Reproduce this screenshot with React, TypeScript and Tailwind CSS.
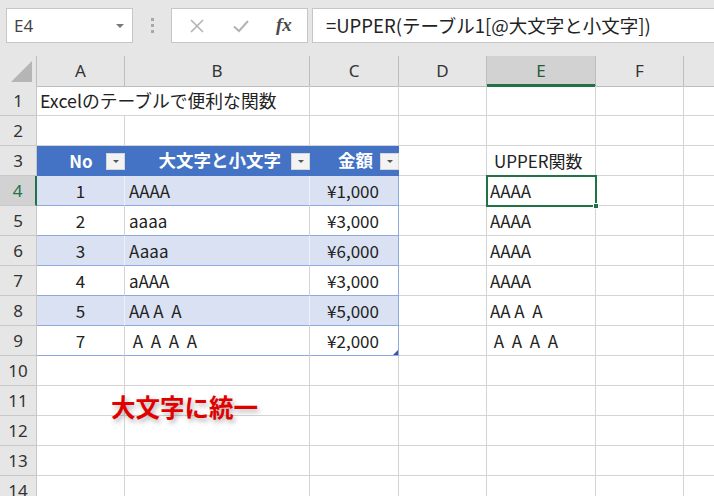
import React from 'react'

const GRID = 'grid grid-cols-[37px_88px_185px_89px_88px_109px_88px_88px]'
const CELL_FONT = { fontFamily: '"Noto Sans CJK JP", "Noto Sans", sans-serif' }
const HEAD_FONT = { fontFamily: '"Noto Sans", "Noto Sans CJK JP", sans-serif' }

// G is off screen, its label is not visible
const columns = ['A', 'B', 'C', 'D', 'E', 'F', '']

const tableRows = [
  { no: '1', txt: 'AAAA', amt: '¥1,000', up: 'AAAA' },
  { no: '2', txt: 'aaaa', amt: '¥3,000', up: 'AAAA' },
  { no: '3', txt: 'Aaaa', amt: '¥6,000', up: 'AAAA' },
  { no: '4', txt: 'aAAA', amt: '¥3,000', up: 'AAAA' },
  { no: '5', txt: 'AA A  A', amt: '¥5,000', up: 'AA A  A' },
  { no: '7', txt: ' A  A  A  A', amt: '¥2,000', up: ' A  A  A  A' },
]

function FilterButton() {
  return (
    <span className="absolute right-0 top-[7px] flex h-[17px] w-[19px] items-center justify-center border border-[#d6d6d6] bg-[#f3f3f3]">
      <span className="h-0 w-0 border-x-[3px] border-t-[3px] border-x-transparent border-t-[#555]" />
    </span>
  )
}

function RowHeader({ n, active }: { n: number; active?: boolean }) {
  return (
    <div
      style={HEAD_FONT}
      className={
        active
          ? 'flex items-center justify-center border-b border-r-2 border-b-[#c8c8c8] border-r-[#217346] bg-[#d2d2d2] text-[17px] text-[#217346]'
          : 'flex items-center justify-center border-b border-r border-[#c8c8c8] bg-[#e6e6e6] text-[17px] text-[#333]'
      }
    >
      {n}
    </div>
  )
}

function Blank({ className = '' }: { className?: string }) {
  return <div className={`border-b border-r border-[#d4d4d4] ${className}`} />
}

function TextCell({ children, className = '' }: { children: React.ReactNode; className?: string }) {
  return (
    <div
      style={CELL_FONT}
      className={`flex items-center overflow-hidden whitespace-pre border-b border-r text-[17px] text-[#222] ${className}`}
    >
      {children}
    </div>
  )
}

export default function App() {
  return (
    <div className="h-[496px] w-[714px] overflow-hidden bg-white">
      {/* formula bar */}
      <div className="flex h-[56px] items-start bg-[#e6e6e6] pt-2">
        <div className="ml-[6px] flex h-[35px] w-[127px] items-center justify-between border border-[#c6c6c6] bg-white pl-[7px] pr-[8px]">
          <span style={HEAD_FONT} className="text-[17px] text-[#444]">
            E4
          </span>
          <span className="h-0 w-0 border-x-[4px] border-t-[4px] border-x-transparent border-t-[#777]" />
        </div>
        <div className="flex w-[38px] flex-col items-center gap-[3px] pt-[10px]">
          <span className="h-[3px] w-[3px] bg-[#a8a8a8]" />
          <span className="h-[3px] w-[3px] bg-[#a8a8a8]" />
          <span className="h-[3px] w-[3px] bg-[#a8a8a8]" />
        </div>
        <div className="flex h-[35px] w-[137px] items-center border border-[#c6c6c6] bg-white">
          <svg width="14" height="14" viewBox="0 0 14 14" className="ml-[18px]">
            <path d="M1 1 L13 13 M13 1 L1 13" stroke="#b3b3b3" strokeWidth="1.6" fill="none" />
          </svg>
          <svg width="16" height="14" viewBox="0 0 16 14" className="ml-[29px]">
            <path d="M1 7.5 L6 12 L15 2" stroke="#b3b3b3" strokeWidth="2" fill="none" />
          </svg>
          <span
            style={{ fontFamily: '"Liberation Serif", "DejaVu Serif", serif' }}
            className="ml-[27px] text-[19px] font-bold italic text-[#4a4a4a]"
          >
            fx
          </span>
        </div>
        <div className="ml-[4px] flex h-[35px] flex-1 items-center border border-r-0 border-[#c6c6c6] bg-white pl-[13px]">
          <span style={CELL_FONT} className="text-[18.5px] text-[#222]">
            =UPPER(テーブル1[@大文字と小文字])
          </span>
        </div>
      </div>

      <div className="relative w-[772px]">
        {/* column headers */}
        <div className={`${GRID} h-[30px]`}>
          <div className="flex items-end justify-end border-b border-r border-[#bdbdbd] bg-[#e6e6e6] pb-[4px] pr-[4px]">
            <svg width="21" height="21" viewBox="0 0 21 21">
              <path d="M21 0 L21 21 L0 21 Z" fill="#b5b5b5" />
            </svg>
          </div>
          {columns.map((c, i) => (
            <div
              key={i}
              style={HEAD_FONT}
              className={
                c === 'E'
                  ? 'flex items-center justify-center border-b-[3px] border-r border-b-[#217346] border-r-[#bdbdbd] bg-[#d2d2d2] pt-[2px] text-[17px] text-[#1e5c3a]'
                  : 'flex items-center justify-center border-b border-r border-[#bdbdbd] bg-[#e6e6e6] text-[17px] text-[#333]'
              }
            >
              {c}
            </div>
          ))}
        </div>

        {/* row 1 */}
        <div className={`${GRID} h-[30px]`}>
          <RowHeader n={1} />
          <div style={CELL_FONT} className="relative z-10 flex items-center whitespace-nowrap border-b border-[#d4d4d4] pl-[3px] text-[17.8px] text-[#222]">
            Excelのテーブルで便利な関数
          </div>
          <Blank />
          <Blank />
          <Blank />
          <Blank />
          <Blank />
          <Blank />
        </div>

        {/* row 2 */}
        <div className={`${GRID} h-[30px]`}>
          <RowHeader n={2} />
          <Blank />
          <Blank />
          <Blank />
          <Blank />
          <Blank />
          <Blank />
          <Blank />
        </div>

        {/* row 3: table header */}
        <div className={`${GRID} h-[30px]`}>
          <RowHeader n={3} />
          <div style={CELL_FONT} className="relative flex items-center justify-center border-b border-[#4472c4] bg-[#4472c4] text-[17px] font-bold text-white">
            No
            <FilterButton />
          </div>
          <div style={CELL_FONT} className="relative flex items-center justify-end border-b border-[#4472c4] bg-[#4472c4] pr-[29px] text-[17.5px] font-bold text-white">
            大文字と小文字
            <FilterButton />
          </div>
          <div style={CELL_FONT} className="relative flex items-center justify-end border-b border-[#4472c4] bg-[#4472c4] pr-[26px] text-[17.5px] font-bold text-white">
            金額
            <FilterButton />
          </div>
          <Blank />
          <TextCell className="border-[#d4d4d4] pl-[7px]">UPPER関数</TextCell>
          <Blank />
          <Blank />
        </div>

        {/* rows 4-9: table body */}
        {tableRows.map((r, i) => {
          const band = i % 2 === 0
          const bg = band ? 'bg-[#d9e1f2]' : 'bg-white'
          const inner = band ? 'border-r-[#eef1f8]' : 'border-r-[#d4d4d4]'
          return (
            <div key={r.no} className={`${GRID} h-[30px]`}>
              <RowHeader n={i + 4} active={i === 0} />
              <TextCell className={`justify-center border-b-[#8ea9db] ${inner} ${bg}`}>{r.no}</TextCell>
              <TextCell className={`border-b-[#8ea9db] ${inner} ${bg} pl-[4px]`}>{r.txt}</TextCell>
              <TextCell className={`relative justify-end border-b-[#8ea9db] border-r-[#8ea9db] ${bg} pr-[19px]`}>
                {r.amt}
                {i === tableRows.length - 1 && (
                  <svg width="5" height="5" viewBox="0 0 5 5" className="absolute bottom-0 right-0">
                    <path d="M5 0 L5 5 L0 5 Z" fill="#3f51a8" />
                  </svg>
                )}
              </TextCell>
              <Blank />
              <TextCell className="border-[#d4d4d4] pl-[3px]">{r.up}</TextCell>
              <Blank />
              <Blank />
            </div>
          )
        })}

        {/* rows 10-14 */}
        {[10, 11, 12, 13, 14].map((n) => (
          <div key={n} className={`${GRID} h-[30px]`}>
            <RowHeader n={n} />
            <Blank />
            <Blank />
            <Blank />
            <Blank />
            <Blank />
            <Blank />
            <Blank />
          </div>
        ))}

        {/* active cell E4 */}
        <div className="pointer-events-none absolute left-[486px] top-[119px] h-[32px] w-[111px] border-2 border-[#217346]">
          <span className="absolute -bottom-[4px] -right-[4px] h-[6px] w-[6px] border border-white bg-[#217346]" />
        </div>

        {/* red annotation */}
        <div
          style={{ ...CELL_FONT, textShadow: '2px 3px 5px rgba(0,0,0,0.3)' }}
          className="absolute left-[111px] top-[339px] text-[24.5px] font-bold leading-none text-[#e00000]"
        >
          大文字に統一
        </div>
      </div>
    </div>
  )
}
